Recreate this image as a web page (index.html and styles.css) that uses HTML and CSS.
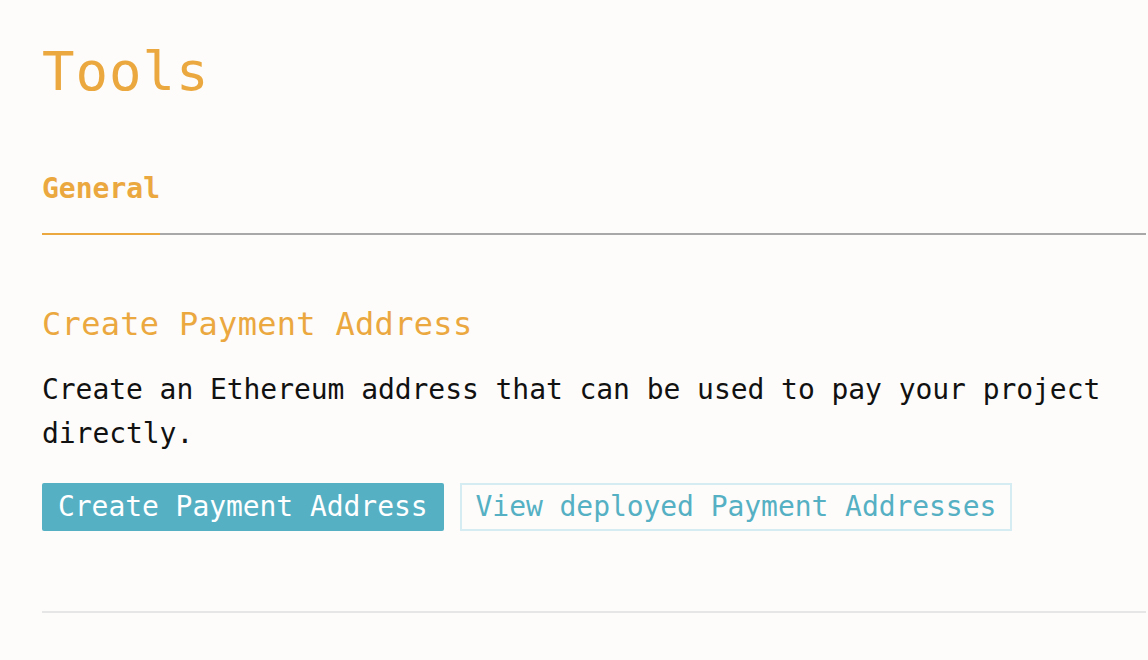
FILE: index.html
```html
<!DOCTYPE html>
<html lang="en">
<head>
<meta charset="utf-8">
<title>Tools</title>
<link rel="stylesheet" href="styles.css">
</head>
<body>
<main class="page">
  <h1 class="page-title">Tools</h1>
  <nav class="tabs">
    <span class="tab tab-active">General</span>
  </nav>
  <section class="tool">
    <h2 class="tool-title">Create Payment Address</h2>
    <p class="tool-desc">Create an Ethereum address that can be used to pay your project directly.</p>
    <div class="actions">
      <button class="btn btn-primary">Create Payment Address</button>
      <button class="btn btn-secondary">View deployed Payment Addresses</button>
    </div>
  </section>
  <hr class="divider">
</main>
</body>
</html>
```

FILE: styles.css
```css
html, body {
  margin: 0;
  padding: 0;
  background: #fdfcfa;
}
body {
  font-family: "DejaVu Sans Mono", "Liberation Mono", monospace;
  color: #111;
}
.page {
  padding: 0 2px 0 42px;
}
.page-title {
  margin: 40px 0 0;
  font-size: 54px;
  line-height: 64px;
  font-weight: normal;
  letter-spacing: 1px;
  color: #eba83f;
}
.tabs {
  margin-top: 67px;
  display: flex;
  border-bottom: 2px solid #a8a8a8;
}
.tab {
  font-size: 28px;
  line-height: 36px;
  font-weight: bold;
  padding-bottom: 26px;
  margin-bottom: -2px;
  color: #eba83f;
}
.tab-active {
  border-bottom: 2px solid #eba83f;
}
.tool-title {
  margin: 69px 0 0;
  font-size: 32px;
  line-height: 40px;
  font-weight: normal;
  letter-spacing: 0.3px;
  color: #eba83f;
}
.tool-desc {
  margin: 24px 0 0;
  font-size: 28px;
  line-height: 44px;
  letter-spacing: -0.06px;
}
.actions {
  margin-top: 27px;
  display: flex;
  gap: 16px;
}
.btn {
  font-family: inherit;
  font-size: 28px;
  line-height: 44px;
  letter-spacing: -0.06px;
  border-radius: 2px;
  cursor: pointer;
}
.btn-primary {
  background: #55b0c4;
  color: #fff;
  border: none;
  padding: 2px 16px;
}
.btn-secondary {
  background: #fdfcfa;
  color: #55b0c4;
  border: 2px solid #d5edf2;
  border-radius: 0;
  padding: 0 14px;
}
.divider {
  margin: 80px 0 0;
  border: none;
  height: 2px;
  background: #e6e6e6;
}
```
